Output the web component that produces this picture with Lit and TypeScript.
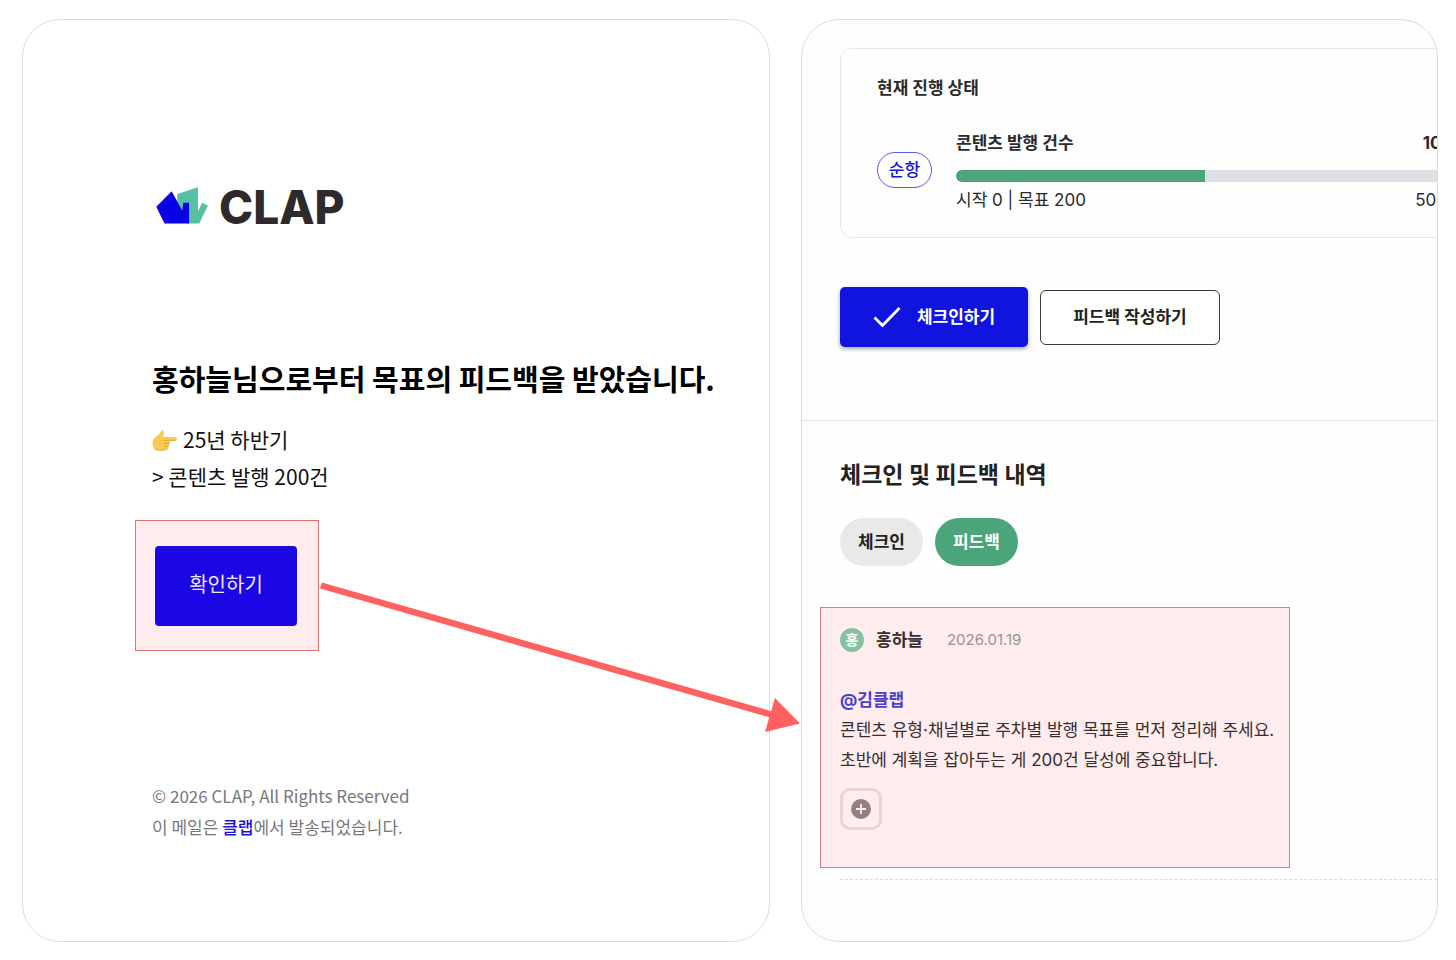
import { LitElement, html, css } from "lit";
import { customElement, property } from "lit/decorators.js";

const pointingHand = html`<svg class="hand" viewBox="0 0 26 22" role="img" aria-label="👉">
  <path
    d="M1 11 C2 9 5.500 7.200 7.300 5 C8.500 3.600 8.800 1.600 10.400 1.600 C12.600 1.900 12.300 4.900 11.300 7 L11 8 H23.300 C25.700 8.200 25.700 11.200 23.300 11.400 H17.500 C18.500 12 18.300 14 17 14.400 C17.800 15.300 17.400 17 16.200 17.300 C16.700 18.500 16.200 20 15 20.300 C12 21.600 6 21.600 3 20.400 C0.500 18.500 0.200 14 1 11 Z"
    fill="#f8cb50"
  />
  <path
    d="M23.300 11.400 H12 M17 14.400 H12.500 M16.200 17.300 H12.500 M15 20.300 C12 21.600 6 21.600 3 20.400"
    fill="none"
    stroke="#dfa13c"
    stroke-width="0.900"
    stroke-linecap="round"
  />
</svg>`;

@customElement("clap-logo")
export class ClapLogo extends LitElement {
  static styles = css`
    :host {
      display: flex;
      align-items: center;
      gap: 11px;
      height: 37px;
      margin-left: 4px;
    }
    .mark {
      width: 52px;
      height: 37px;
      flex: none;
    }
    .word {
      font: 800 46px/37px Inter, sans-serif;
      color: #2e2a2b;
      padding-top: 4px;
    }
  `;
  render() {
    return html`
      <svg class="mark" viewBox="0 0 52 37" aria-hidden="true">
        <path d="M21.300 7 L42 0.300 V24.500 L46 15.700 L52 18.500 L43.300 36.400 H31 L21.300 17 Z" fill="#58bfa5" />
        <path d="M0.300 19.700 L15.700 4.300 L26.300 23.700 L27.300 15.700 H33 V36.400 H8.500 Z" fill="#0a00e6" />
      </svg>
      <span class="word">CLAP</span>
    `;
  }
}

@customElement("mail-panel")
export class MailPanel extends LitElement {
  static styles = css`
    :host {
      display: block;
      box-sizing: border-box;
      border: 1px solid #dcdcdf;
      border-radius: 38px;
      background: #fff;
      padding: 167px 24px 99px 129px;
      color: #111;
      white-space: nowrap;
    }
    h1 {
      margin: 132px 0 0;
      font-size: 29px;
      line-height: 44px;
      font-weight: 700;
      color: #000;
    }
    .goal {
      margin: 21px 0 0;
      font-size: 21px;
      line-height: 37px;
    }
    .row {
      display: flex;
      align-items: center;
    }
    .hand {
      width: 26px;
      height: 22px;
      margin-right: 5px;
    }
    .mark-box {
      position: relative;
      width: fit-content;
      margin: 25px 0 0 -17px;
      padding: 25px 21px 24px 19px;
      border: 1px solid #e27272;
      background: #ffecee;
    }
    .confirm {
      display: block;
      width: 142px;
      height: 80px;
      padding: 0 0 6px;
      border: 0;
      border-radius: 4px;
      background: #1b06e4;
      color: #efe6fa;
      font-family: inherit;
      font-size: 20px;
    }
    .arrow {
      position: absolute;
      left: 100%;
      top: 59px;
      width: 484px;
      height: 154px;
      pointer-events: none;
    }
    footer {
      margin-top: 129px;
      font-size: 17px;
      line-height: 31px;
      color: #77777b;
    }
    a {
      color: #1a10dc;
      font-weight: 500;
      text-decoration: none;
    }
  `;
  render() {
    return html`
      <clap-logo></clap-logo>
      <h1>홍하늘님으로부터 목표의 피드백을 받았습니다.</h1>
      <div class="goal">
        <div class="row">${pointingHand}<span>25년 하반기</span></div>
        <div>&gt; 콘텐츠 발행 200건</div>
      </div>
      <div class="mark-box">
        <button class="confirm" type="button">확인하기</button>
        <svg class="arrow" viewBox="0 0 484 154" aria-hidden="true">
          <path d="M3 5.500 L455 135" stroke="#ff6060" stroke-width="6.500" />
          <path d="M457 118 L482 143.500 L447 152 Z" fill="#ff6060" />
        </svg>
      </div>
      <footer>
        <div>© 2026 CLAP, All Rights Reserved</div>
        <div>이 메일은 <a href="#clap">클랩</a>에서 발송되었습니다.</div>
      </footer>
    `;
  }
}

@customElement("goal-panel")
export class GoalPanel extends LitElement {
  @property({ type: Number }) progress = 50;

  static styles = css`
    :host {
      display: block;
      box-sizing: border-box;
      overflow: hidden;
      border: 1px solid #dcdcdf;
      border-radius: 38px;
      background: #fefefe;
      color: #2a2a2c;
      font-family: Inter, "Noto Sans CJK KR", sans-serif;
      font-size: 17px;
      line-height: 26px;
      white-space: nowrap;
    }
    h2,
    h3,
    p {
      margin: 0;
    }
    h3 {
      font-size: 17px;
      font-weight: 700;
    }
    button {
      box-sizing: border-box;
      padding: 0 0 3px;
      font-family: inherit;
      font-size: 17px;
      font-weight: 700;
      color: #222;
    }
    .top {
      padding: 28px 0 73px 38px;
      border-bottom: 1px solid #e4e4e6;
    }
    .status {
      margin-right: -53px;
      padding: 26px 36px 24px;
      border: 1px solid #e6e6ea;
      border-radius: 12px;
    }
    .metric {
      display: flex;
      align-items: flex-start;
      gap: 24px;
      margin-top: 29px;
    }
    .badge {
      box-sizing: border-box;
      width: 55px;
      height: 36px;
      margin-top: 22px;
      border: 1px solid #5a5ae0;
      border-radius: 18px;
      text-align: center;
      line-height: 34px;
      font-weight: 500;
      color: #1616d8;
    }
    .detail {
      flex: 1;
    }
    .pair {
      display: flex;
      justify-content: space-between;
    }
    .strong {
      font-weight: 700;
    }
    .track {
      height: 12px;
      margin: 14px 0 5px;
      border-radius: 6px;
      background: #dfe0e5;
      overflow: hidden;
    }
    .fill {
      height: 100%;
      background: #4ca57a;
    }
    .actions {
      display: flex;
      align-items: center;
      gap: 12px;
      margin-top: 49px;
    }
    .checkin {
      display: flex;
      align-items: center;
      justify-content: center;
      gap: 16px;
      width: 188px;
      height: 60px;
      border: 0;
      border-radius: 5px;
      background: #1014de;
      color: #fff;
      box-shadow: 0 2px 4px rgba(0, 0, 0, 0.35);
    }
    .check {
      width: 28px;
      height: 22px;
      padding-top: 3px;
    }
    .write {
      width: 180px;
      height: 55px;
      border: 1px solid #3a3a3c;
      border-radius: 6px;
      background: #fff;
    }
    .history {
      padding: 37px 0 60px 38px;
    }
    h2 {
      font-size: 23px;
      line-height: 34px;
      color: #222;
    }
    .tabs {
      display: flex;
      gap: 12px;
      margin-top: 26px;
    }
    .tab {
      height: 48px;
      padding: 0 18px 3px;
      border: 0;
      border-radius: 24px;
      background: #e9e9e9;
    }
    .tab.on {
      background: #4ca57a;
      color: #fff;
    }
    .feedback {
      width: fit-content;
      margin: 41px 0 0 -20px;
      padding: 20px 15px 37px 19px;
      border: 1px solid #e07c7c;
      background: #ffecee;
      color: #3a2d2f;
    }
    .head {
      display: flex;
      align-items: center;
      height: 24px;
    }
    .avatar {
      width: 24px;
      height: 24px;
      margin-right: 12px;
      border-radius: 50%;
      background: #86c2a0;
      color: #fff;
      font-size: 14px;
      line-height: 24px;
      font-weight: 700;
      text-align: center;
    }
    .date {
      margin-left: 24px;
      font-size: 15px;
      color: #9d9193;
    }
    .body {
      margin-top: 33px;
      line-height: 30px;
    }
    .mention {
      font-weight: 700;
      color: #4a3ecb;
      text-decoration: none;
    }
    .react {
      display: flex;
      align-items: center;
      justify-content: center;
      width: 42px;
      height: 42px;
      margin-top: 13px;
      padding: 0;
      border: 3px solid #e5d5d8;
      border-radius: 10px;
      background: transparent;
    }
    .plus {
      width: 20px;
      height: 20px;
    }
    .end {
      margin: 11px 0 0;
      border: 0;
      border-top: 1px dashed #dcdce0;
    }
  `;

  render() {
    return html`
      <section class="top">
        <div class="status">
          <h3>현재 진행 상태</h3>
          <div class="metric">
            <span class="badge">순항</span>
            <div class="detail">
              <div class="pair strong"><span>콘텐츠 발행 건수</span><span>100</span></div>
              <div class="track"><div class="fill" style="width:${this.progress}%"></div></div>
              <div class="pair"><span>시작 0 | 목표 200</span><span>${this.progress}%</span></div>
            </div>
          </div>
        </div>
        <div class="actions">
          <button class="checkin" type="button">
            <svg class="check" viewBox="0 0 28 22" aria-hidden="true">
              <path d="M1.500 11.500 L9.500 19.500 L26.500 2" fill="none" stroke="#fff" stroke-width="2.800" />
            </svg>
            체크인하기
          </button>
          <button class="write" type="button">피드백 작성하기</button>
        </div>
      </section>
      <section class="history">
        <h2>체크인 및 피드백 내역</h2>
        <div class="tabs">
          <button class="tab" type="button">체크인</button>
          <button class="tab on" type="button" aria-pressed="true">피드백</button>
        </div>
        <article class="feedback">
          <div class="head">
            <span class="avatar">홍</span>
            <span class="strong">홍하늘</span>
            <time class="date" datetime="2026-01-19">2026.01.19</time>
          </div>
          <div class="body">
            <p><a class="mention" href="#member">@김클랩</a></p>
            <p>콘텐츠 유형·채널별로 주차별 발행 목표를 먼저 정리해 주세요.</p>
            <p>초반에 계획을 잡아두는 게 200건 달성에 중요합니다.</p>
          </div>
          <button class="react" type="button" aria-label="+">
            <svg class="plus" viewBox="0 0 20 20" aria-hidden="true">
              <circle cx="10" cy="10" r="10" fill="#928183" />
              <path d="M10 5 V15 M5 10 H15" stroke="#ffecee" stroke-width="1.800" />
            </svg>
          </button>
        </article>
        <hr class="end" />
      </section>
    `;
  }
}

@customElement("app-root")
export class AppRoot extends LitElement {
  static styles = css`
    :host {
      display: grid;
      grid-template-columns: minmax(0, 748fr) minmax(0, 637fr);
      gap: 31px;
      box-sizing: border-box;
      min-height: 100vh;
      padding: 19px 18px 18px 22px;
      background: #fff;
      font-family: "Noto Sans CJK KR", sans-serif;
    }
    .mail {
      position: relative;
      z-index: 1;
    }
  `;
  render() {
    return html`
      <mail-panel class="mail"></mail-panel>
      <goal-panel></goal-panel>
    `;
  }
}
